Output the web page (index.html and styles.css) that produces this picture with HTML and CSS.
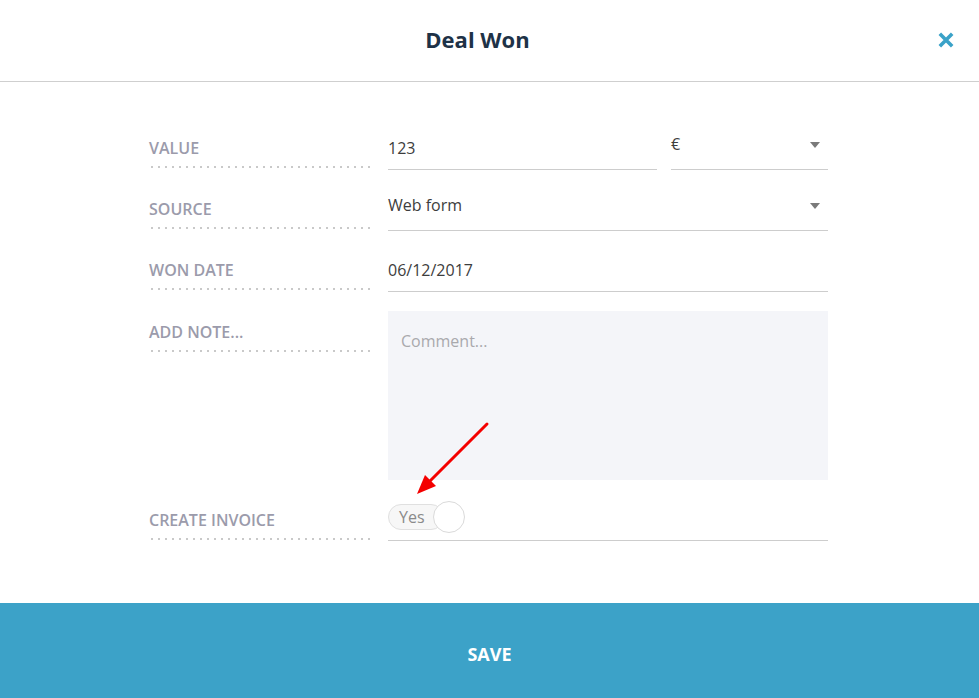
FILE: index.html
```html
<!DOCTYPE html>
<html>
  <head>
    <link rel="stylesheet" href="styles.css">
  </head>
  <body>
    <div class="modal">
      <header class="modal-header">
        <h1 class="modal-title">Deal Won</h1>
        <button class="close-btn" aria-label="Close">
          <svg viewBox="0 0 16 16" width="18" height="18">
            <path d="M2.5 2.5l11 11M13.5 2.5l-11 11"></path>
          </svg>
        </button>
      </header>

      <form class="deal-form">
        <div class="form-row">
          <label class="field-label">Value</label>
          <div class="field-group">
            <div class="field field-value">123</div>
            <div class="field field-select field-currency">
              <span>&euro;</span>
              <span class="caret"></span>
            </div>
          </div>
        </div>

        <div class="form-row">
          <label class="field-label">Source</label>
          <div class="field field-select">
            <span>Web form</span>
            <span class="caret"></span>
          </div>
        </div>

        <div class="form-row">
          <label class="field-label">Won date</label>
          <div class="field">06/12/2017</div>
        </div>

        <div class="form-row row-note">
          <label class="field-label">Add note...</label>
          <textarea class="note-input" placeholder="Comment..."></textarea>
        </div>

        <div class="form-row row-invoice">
          <label class="field-label">Create invoice</label>
          <div class="field field-toggle">
            <div class="toggle">
              <span class="toggle-text">Yes</span>
              <span class="toggle-knob"></span>
            </div>
            <!-- annotation arrow -->
            <svg class="annotation-arrow" viewBox="0 0 80 80" width="80" height="80">
              <line x1="72" y1="4" x2="14" y2="62"></line>
              <polygon points="2,74 10,55 21,66"></polygon>
            </svg>
          </div>
        </div>
      </form>

      <button class="save-btn">SAVE</button>
    </div>
  </body>
</html>
```

FILE: styles.css
```css
* {
  margin: 0;
  padding: 0;
  box-sizing: border-box;
}

body {
  background: #fff;
  font-family: "Open Sans", "Noto Sans", sans-serif;
  color: #3d3d3d;
}

.modal {
  height: 100vh;
  display: flex;
  flex-direction: column;
}

.modal-header {
  position: relative;
  height: 82px;
  display: flex;
  align-items: center;
  justify-content: center;
  padding-right: 24px;
  border-bottom: 1px solid #cfcfcf;
}

.modal-title {
  font-size: 22px;
  font-weight: 700;
  color: #1e3247;
  margin-bottom: 3px;
}

.close-btn {
  position: absolute;
  right: 24px;
  top: 31px;
  border: none;
  background: none;
  cursor: pointer;
  display: flex;
}

.close-btn path {
  stroke: #3aa2c8;
  stroke-width: 3.2;
  fill: none;
}

.deal-form {
  width: 681px;
  margin: 0 auto;
  padding-top: 45px;
  display: flex;
  flex-direction: column;
  gap: 18px;
}

.form-row {
  display: grid;
  grid-template-columns: 222px 440px;
  column-gap: 17px;
  align-items: start;
}

.row-note,
.row-invoice {
  margin-top: 1px;
}

.field-label {
  display: block;
  padding: 11px 0 10px;
  line-height: 20px;
  font-size: 16px;
  font-weight: 600;
  text-transform: uppercase;
  color: #9b9bab;
  background-image: linear-gradient(to right, #c9c9c9 2px, transparent 2px);
  background-size: 7px 2px;
  background-repeat: repeat-x;
  background-position: 2px 100%;
}

.field-group {
  display: flex;
  gap: 14px;
}

.field {
  height: 43px;
  display: flex;
  align-items: center;
  font-size: 16px;
  border-bottom: 1px solid #cdcdcd;
  padding-bottom: 1px;
}

.field-value {
  flex: 0 0 269px;
}

.field-currency {
  flex: 1;
}

.field-select {
  justify-content: space-between;
  align-items: flex-start;
  padding-top: 6px;
}

.field-select .caret {
  margin-top: 9px;
}

.caret {
  width: 0;
  height: 0;
  margin-right: 8px;
  border-left: 5px solid transparent;
  border-right: 5px solid transparent;
  border-top: 6px solid #7a7a7a;
}

.note-input {
  height: 169px;
  border: none;
  resize: none;
  background: #f4f5f9;
  padding: 19px 13px;
  font-family: inherit;
  font-size: 16px;
  line-height: 22px;
  color: #3d3d3d;
  outline: none;
}

.note-input::placeholder {
  color: #a9a9ad;
}

.field-toggle {
  position: relative;
  height: 42px;
  align-items: flex-start;
  padding-top: 2px;
}

.toggle {
  position: relative;
  width: 77px;
  height: 32px;
}

.toggle-text {
  position: absolute;
  left: 0;
  top: 3px;
  width: 56px;
  height: 26px;
  padding-left: 10px;
  line-height: 24px;
  font-size: 16px;
  color: #8a8a8a;
  background: #f7f7f7;
  border: 1px solid #e0e0e0;
  border-radius: 13px;
}

.toggle-knob {
  position: absolute;
  left: 45px;
  top: 0;
  width: 32px;
  height: 32px;
  border-radius: 50%;
  background: #fff;
  border: 1px solid #dadada;
}

.annotation-arrow {
  position: absolute;
  left: 27px;
  top: -79px;
}

.annotation-arrow line {
  stroke: #f40000;
  stroke-width: 3;
  stroke-linecap: round;
}

.annotation-arrow polygon {
  fill: #f40000;
}

.save-btn {
  margin-top: auto;
  height: 95px;
  width: 100%;
  border: none;
  padding-top: 6px;
  background: #3ca2c8;
  color: #fff;
  font-family: inherit;
  font-size: 18px;
  font-weight: 700;
  cursor: pointer;
}
```
